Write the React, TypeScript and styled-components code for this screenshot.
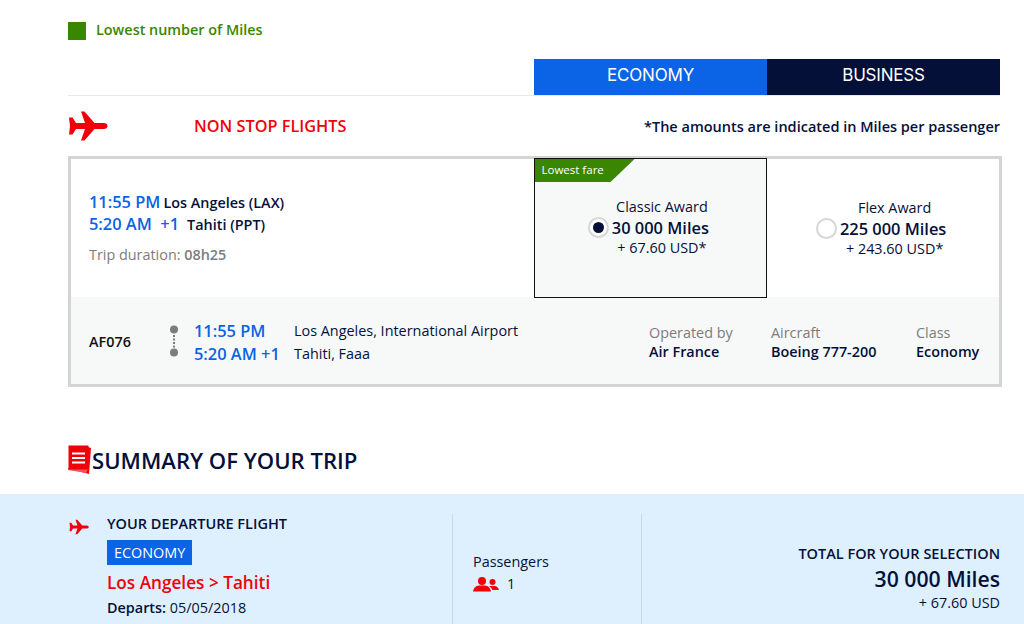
import React from "react";
import styled, { createGlobalStyle } from "styled-components";

const GlobalStyle = createGlobalStyle`
  html, body {
    margin: 0;
    padding: 0;
    background: #fff;
    font-family: "Open Sans", "Liberation Sans", sans-serif;
    color: #051039;
  }
  * { box-sizing: border-box; }
`;

const blue = "#0b63e5";
const navy = "#051039";
const red = "#f00008";
const green = "#3a8600";

const Page = styled.div`
  width: 1024px;
  height: 624px;
  overflow: hidden;
`;

const Content = styled.div`
  margin: 0 22px 0 68px;
  padding-top: 22px;
`;

const Legend = styled.div`
  display: flex;
  align-items: center;
  gap: 10px;
  height: 18px;
  font-size: 14.4px;
  font-weight: 600;
  color: ${green};
`;

const LegendSquare = styled.span`
  width: 18px;
  height: 18px;
  background: ${green};
`;

const LegendText = styled.span`
  margin-bottom: 3px;
`;

const Tabs = styled.div`
  display: flex;
  justify-content: flex-end;
  width: 932px;
  margin-top: 19px;
  border-bottom: 1px solid #e8e8e8;
`;

const Tab = styled.div<{ $active?: boolean }>`
  width: 233px;
  height: 36px;
  padding-bottom: 4px;
  display: flex;
  align-items: center;
  justify-content: center;
  font-family: Inter, "Open Sans", sans-serif;
  font-size: 17px;
  letter-spacing: -0.2px;
  color: #fff;
  background: ${(p) => (p.$active ? blue : navy)};
`;

const FlightsHeader = styled.div`
  display: flex;
  align-items: center;
  width: 932px;
  height: 60px;
`;

const PlaneSlot = styled.div`
  width: 126px;
  display: flex;
`;

const FlightsTitle = styled.h2`
  margin: 0;
  font-size: 16.3px;
  font-weight: 600;
  color: ${red};
`;

const Note = styled.div`
  margin-left: auto;
  font-size: 14.5px;
  font-weight: 600;
`;

const Card = styled.div`
  width: 934px;
  height: 231px;
  border: 3px solid #d4d4d4;
  display: flex;
  flex-direction: column;
`;

const FareRow = styled.div`
  display: flex;
  height: 138px;
`;

const Route = styled.div`
  width: 463px;
  padding: 32px 0 0 18px;
`;

const RouteLine = styled.div`
  display: flex;
  align-items: baseline;
  height: 22px;
  line-height: 22px;
`;

const Time = styled.span<{ $gap?: number }>`
  font-size: 16.4px;
  font-weight: 600;
  color: ${blue};
  white-space: pre;
  margin-right: ${(p) => p.$gap ?? 0}px;
`;

const City = styled.span`
  font-size: 14.4px;
  font-weight: 600;
  color: ${navy};
`;

const Duration = styled.div`
  margin-top: 10px;
  font-size: 14.4px;
  color: #7c7c7c;

  b {
    font-weight: 600;
  }
`;

const FareOption = styled.div<{ $selected?: boolean }>`
  position: relative;
  width: ${(p) => (p.$selected ? "234px" : "232px")};
  height: ${(p) => (p.$selected ? "140px" : "138px")};
  margin-top: ${(p) => (p.$selected ? "-1px" : "0")};
  background: ${(p) => (p.$selected ? "#f7f9f9" : "#fff")};
  border: ${(p) => (p.$selected ? `1px solid #111` : "none")};
  padding-top: ${(p) => (p.$selected ? "38px" : "39px")};
  display: flex;
  flex-direction: column;
  align-items: center;
`;

const Ribbon = styled.div`
  position: absolute;
  left: 0;
  top: 0;
  width: 100px;
  height: 23px;
  padding: 2px 0 0 7px;
  font-size: 11.5px;
  line-height: 18px;
  color: #fff;
  background: ${green};
  clip-path: polygon(0 0, 100% 0, 76% 100%, 0 100%);
`;

const AwardName = styled.div`
  font-size: 14.4px;
  line-height: 19px;
  padding-left: 23px;
`;

const MilesLine = styled.div`
  display: flex;
  align-items: center;
  gap: 3px;
  height: 22px;
  padding-right: 4px;
  font-size: 16.4px;
  font-weight: 600;
`;

const Radio = styled.span<{ $checked?: boolean }>`
  width: 21px;
  height: 21px;
  border-radius: 50%;
  border: 2px solid #d6d6d6;
  background: #fff;
  display: flex;
  align-items: center;
  justify-content: center;

  &::after {
    content: "";
    width: 11px;
    height: 11px;
    border-radius: 50%;
    background: ${(p) => (p.$checked ? navy : "transparent")};
  }
`;

const Tax = styled.div`
  font-size: 14.4px;
  line-height: 20px;
  padding-left: 23px;
`;

const DetailRow = styled.div`
  flex: 1;
  display: flex;
  align-items: center;
  background: #f7f9f9;
  padding: 2px 0 0 18px;
`;

const FlightNo = styled.div`
  width: 80px;
  font-size: 14.4px;
  font-weight: 600;
  color: #111;
`;

const Stops = styled.div`
  width: 25px;
  margin-right: 0;
  display: flex;
`;

const Times = styled.div`
  width: 100px;
  display: flex;
  flex-direction: column;
  line-height: 23px;
`;

const Places = styled.div`
  width: 355px;
  font-size: 14.4px;
  line-height: 23px;
  padding-top: 1px;
`;

const Meta = styled.div<{ $w: number }>`
  width: ${(p) => p.$w}px;
  font-size: 14.4px;
  line-height: 19px;
  color: #7c7c7c;

  b {
    display: block;
    font-weight: 600;
    color: ${navy};
  }
`;

const SummaryHeading = styled.div`
  display: flex;
  align-items: center;
  margin-top: 58px;
  height: 30px;
`;

const SummaryTitle = styled.h2`
  margin: 0;
  font-size: 22.1px;
  font-weight: 600;
  white-space: nowrap;
`;

const SummaryPanel = styled.div`
  margin-top: 19px;
  height: 150px;
  background: #def0fe;
  display: flex;
  padding: 20px 24px 0 0;
`;

const DepartureCol = styled.div`
  width: 453px;
  height: 130px;
  display: flex;
  border-right: 1px solid #cfd8df;
`;

const SmallPlaneSlot = styled.div`
  width: 107px;
  padding: 4px 0 0 69px;
`;

const DepartureInfo = styled.div`
  display: flex;
  flex-direction: column;
  align-items: flex-start;
`;

const UpperLabel = styled.div`
  font-size: 14.5px;
  font-weight: 600;
  line-height: 20px;
`;

const Badge = styled.div`
  margin-top: 6px;
  height: 25px;
  padding: 0 7px;
  display: flex;
  align-items: center;
  font-size: 14.4px;
  color: #fff;
  background: ${blue};
`;

const RouteTitle = styled.div`
  margin-top: 6px;
  font-size: 17.2px;
  font-weight: 600;
  line-height: 24px;
  color: ${red};
`;

const Departs = styled.div`
  margin-top: 3px;
  font-size: 14.4px;
  line-height: 20px;

  b {
    font-weight: 600;
  }
`;

const PassengersCol = styled.div`
  width: 189px;
  height: 130px;
  padding: 38px 0 0 20px;
  border-right: 1px solid #cfd8df;
  font-size: 14.4px;
  line-height: 20px;
`;

const PassengerCount = styled.div`
  display: flex;
  align-items: center;
  gap: 8px;
  height: 24px;
`;

const TotalCol = styled.div`
  flex: 1;
  padding-top: 30px;
  display: flex;
  flex-direction: column;
  align-items: flex-end;
`;

const TotalMiles = styled.div`
  font-size: 21.2px;
  font-weight: 600;
  line-height: 30px;
`;

const TotalTax = styled.div`
  font-size: 14.4px;
  line-height: 18px;
`;

const PlaneIcon = ({ width, height }: { width: number; height: number }) => (
  <svg width={width} height={height} viewBox="0 0 40 30" fill={red}>
    <path d="M1 6.5 L4.5 6.5 L8 12 L17 12 L13 0.5 L16.5 0.5 L26.5 12 L35.5 12 Q39.5 12 39.5 15 Q39.5 18 35.5 18 L26.5 18 L16.5 29.5 L13 29.5 L17 18 L8 18 L4.5 23.5 L1 23.5 L2 15 Z" />
  </svg>
);

const StopsIcon = () => (
  <svg width="10" height="34" viewBox="0 0 10 34">
    <circle cx="5" cy="4.5" r="4" fill="#7c7c7c" />
    <line x1="5" y1="10" x2="5" y2="24" stroke="#7c7c7c" strokeWidth="2" strokeDasharray="2 1.5" />
    <circle cx="5" cy="27.5" r="4" fill="#7c7c7c" />
  </svg>
);

const SummaryIcon = () => (
  <svg width="24" height="30" viewBox="0 0 24 30">
    <path d="M2 24 L21 29 L23 3 L20 2 L20 24 Z" fill={red} />
    <path d="M0 25 L18 28 L20 24 L0 23 Z" fill="#f5555a" />
    <rect x="0.5" y="0.5" width="20" height="24" fill={red} />
    <rect x="4" y="7.5" width="13" height="2" fill="#fff" />
    <rect x="4" y="12" width="13" height="2" fill="#fff" />
    <rect x="4" y="16.5" width="13" height="2" fill="#fff" />
  </svg>
);

const PassengersIcon = () => (
  <svg width="26" height="15" viewBox="0 0 26 15" fill={red}>
    <circle cx="9" cy="4" r="4" />
    <path d="M0 14.5 Q1 9 6 8.5 L12 8.5 Q17 9 18 14.5 Z" />
    <circle cx="19.5" cy="5" r="3" />
    <path d="M16 9 L22 9 Q25 9.5 26 13 L19.5 13 Q18.5 10.5 16 9 Z" />
  </svg>
);

const App: React.FC = () => (
  <Page>
    <GlobalStyle />
    <Content>
      <Legend>
        <LegendSquare />
        <LegendText>Lowest number of Miles</LegendText>
      </Legend>

      <Tabs>
        <Tab $active>ECONOMY</Tab>
        <Tab>BUSINESS</Tab>
      </Tabs>

      <FlightsHeader>
        <PlaneSlot>
          <PlaneIcon width={40} height={30} />
        </PlaneSlot>
        <FlightsTitle>NON STOP FLIGHTS</FlightsTitle>
        <Note>*The amounts are indicated in Miles per passenger</Note>
      </FlightsHeader>

      <Card>
        <FareRow>
          <Route>
            <RouteLine>
              <Time $gap={3}>11:55 PM</Time>
              <City>Los Angeles (LAX)</City>
            </RouteLine>
            <RouteLine>
              <Time $gap={8}>5:20 AM  +1</Time>
              <City>Tahiti (PPT)</City>
            </RouteLine>
            <Duration>
              Trip duration: <b>08h25</b>
            </Duration>
          </Route>

          <FareOption $selected>
            <Ribbon>Lowest fare</Ribbon>
            <AwardName>Classic Award</AwardName>
            <MilesLine>
              <Radio $checked />
              30 000 Miles
            </MilesLine>
            <Tax>+ 67.60 USD*</Tax>
          </FareOption>

          <FareOption>
            <AwardName>Flex Award</AwardName>
            <MilesLine>
              <Radio />
              225 000 Miles
            </MilesLine>
            <Tax>+ 243.60 USD*</Tax>
          </FareOption>
        </FareRow>

        <DetailRow>
          <FlightNo>AF076</FlightNo>
          <Stops>
            <StopsIcon />
          </Stops>
          <Times>
            <Time>11:55 PM</Time>
            <Time>5:20 AM +1</Time>
          </Times>
          <Places>
            Los Angeles, International Airport
            <br />
            Tahiti, Faaa
          </Places>
          <Meta $w={122}>
            Operated by
            <b>Air France</b>
          </Meta>
          <Meta $w={145}>
            Aircraft
            <b>Boeing 777-200</b>
          </Meta>
          <Meta $w={70}>
            Class
            <b>Economy</b>
          </Meta>
        </DetailRow>
      </Card>

      <SummaryHeading>
        <SummaryIcon />
        <SummaryTitle>SUMMARY OF YOUR TRIP</SummaryTitle>
      </SummaryHeading>
    </Content>

    <SummaryPanel>
      <DepartureCol>
        <SmallPlaneSlot>
          <PlaneIcon width={20} height={16} />
        </SmallPlaneSlot>
        <DepartureInfo>
          <UpperLabel>YOUR DEPARTURE FLIGHT</UpperLabel>
          <Badge>ECONOMY</Badge>
          <RouteTitle>Los Angeles &gt; Tahiti</RouteTitle>
          <Departs>
            <b>Departs:</b> 05/05/2018
          </Departs>
        </DepartureInfo>
      </DepartureCol>

      <PassengersCol>
        Passengers
        <PassengerCount>
          <PassengersIcon />1
        </PassengerCount>
      </PassengersCol>

      <TotalCol>
        <UpperLabel>TOTAL FOR YOUR SELECTION</UpperLabel>
        <TotalMiles>30 000 Miles</TotalMiles>
        <TotalTax>+ 67.60 USD</TotalTax>
      </TotalCol>
    </SummaryPanel>
  </Page>
);

export default App;
